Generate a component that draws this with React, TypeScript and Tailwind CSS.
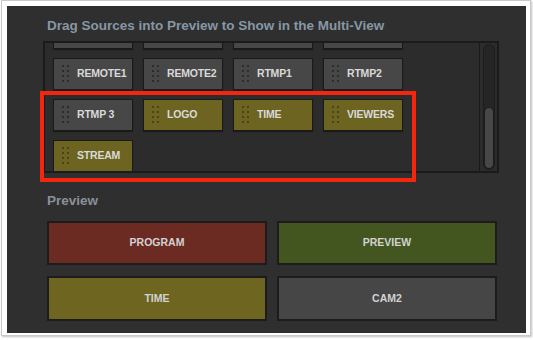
const sources = [
  { label: "", tone: "gray" },
  { label: "", tone: "gray" },
  { label: "", tone: "gray" },
  { label: "", tone: "gray" },
  { label: "REMOTE1", tone: "gray" },
  { label: "REMOTE2", tone: "gray" },
  { label: "RTMP1", tone: "gray" },
  { label: "RTMP2", tone: "gray" },
  { label: "RTMP 3", tone: "gray" },
  { label: "LOGO", tone: "olive" },
  { label: "TIME", tone: "olive" },
  { label: "VIEWERS", tone: "olive" },
  { label: "STREAM", tone: "olive" },
];

function Grip({ olive }: { olive: boolean }) {
  const dot = olive ? "bg-[#4a4316]" : "bg-[#2c2c2c]";
  return (
    <div className="grid grid-cols-2 gap-x-[3px] gap-y-[3px]">
      {Array.from({ length: 8 }).map((_, i) => (
        <span key={i} className={`block size-[2px] ${dot}`} />
      ))}
    </div>
  );
}

function SourceButton({ label, tone }: { label: string; tone: string }) {
  const olive = tone === "olive";
  return (
    <div
      className={`flex h-[32px] w-[80px] items-center gap-[8px] border border-[#1a1a1a] pl-[8px] shadow-[0_1px_1px_rgba(0,0,0,0.4)] ${
        olive ? "bg-[#6d6421]" : "bg-[#474747]"
      }`}
    >
      <Grip olive={olive} />
      {label && (
        <span className="text-[10.5px] font-bold tracking-[-0.2px] text-[#d9d9d9]">
          {label}
        </span>
      )}
    </div>
  );
}

function BigButton({ label, bg }: { label: string; bg: string }) {
  return (
    <div
      className={`flex items-center justify-center border-2 border-[#1c1c1c] ${bg}`}
    >
      <span className="text-[10.5px] font-bold text-[#d2d2d2]">{label}</span>
    </div>
  );
}

export default function App() {
  return (
    <div className="h-[340px] w-[533px] bg-white font-['Liberation_Sans',Arial,sans-serif]">
      <div className="ml-[1px] flex h-[336px] w-[530px] border border-[#c9c9c9] bg-white pb-[2px] pl-[5px] pr-[4px] pt-[5px] shadow-[1px_1px_2px_rgba(0,0,0,0.25)]">
        <div className="relative flex flex-1 flex-col bg-[#2f2f2f] pt-[12px]">
          <h2 className="ml-[40px] text-[13.5px] font-bold leading-[15.5px] text-[#8797a5]">
            Drag Sources into Preview to Show in the Multi-View
          </h2>

          <div className="ml-[36px] mt-[7px] flex h-[132px] w-[456px] border-2 border-[#1b1b1b] bg-[#2c2c2c]">
            <div className="flex-1 overflow-hidden pl-[8px]">
              <div className="-mt-[26px] flex flex-wrap gap-x-[10px] gap-y-[9px]">
                {sources.map((s, i) => (
                  <SourceButton key={i} label={s.label} tone={s.tone} />
                ))}
              </div>
            </div>
            <div className="flex w-[18px] border-l border-[#1a1a1a] py-[1px] pl-[3px] pr-[2px]">
              <div className="flex w-[12px] flex-col justify-end rounded-full border border-[#1c1c1c] bg-[#252525]">
                <div className="h-[62px] rounded-full border border-[#1c1c1c] bg-[#474747]" />
              </div>
            </div>
          </div>

          <p className="ml-[40px] mt-[20px] text-[13.5px] font-bold leading-[15.5px] text-[#8b9097]">
            Preview
          </p>

          <div className="ml-[40px] mt-[13px] grid w-[450px] grid-cols-2 grid-rows-[44px_45px] gap-x-[10px] gap-y-[11px]">
            <BigButton label="PROGRAM" bg="bg-[#6b2a22]" />
            <BigButton label="PREVIEW" bg="bg-[#43561f]" />
            <BigButton label="TIME" bg="bg-[#6e6520]" />
            <BigButton label="CAM2" bg="bg-[#464646]" />
          </div>

          <div className="pointer-events-none absolute left-[33px] top-[85px] h-[91px] w-[376px] border-4 border-[#f4260e]" />
        </div>
      </div>
    </div>
  );
}
